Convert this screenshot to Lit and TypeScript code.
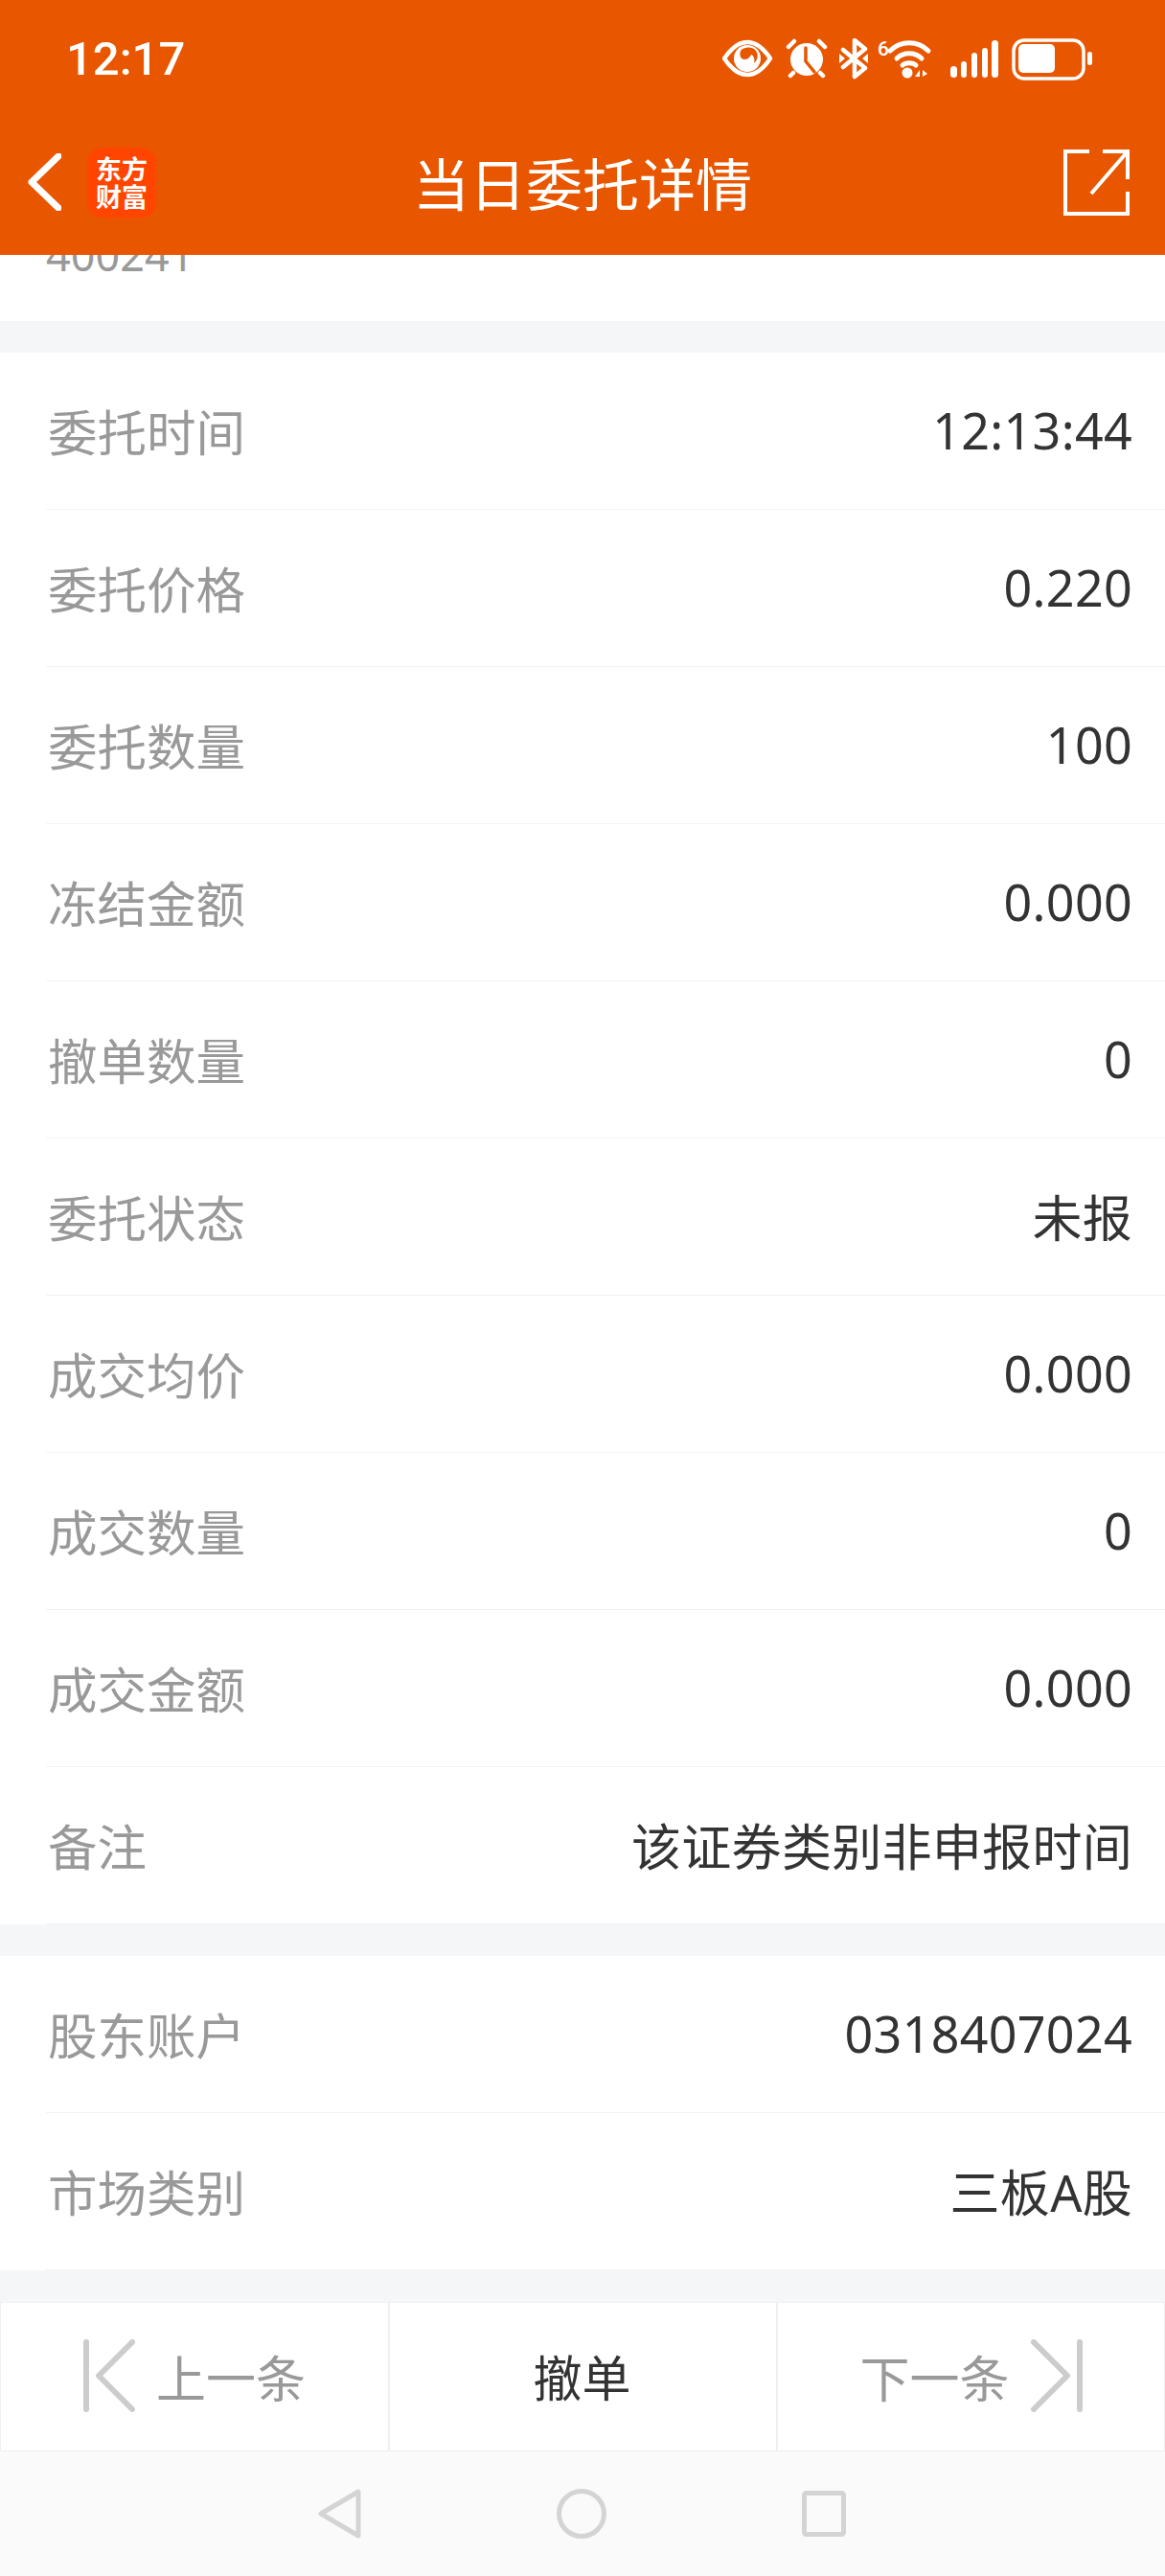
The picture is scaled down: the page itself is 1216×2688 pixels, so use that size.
import { LitElement, html, css } from 'lit';
import { customElement } from 'lit/decorators.js';

const SECTION_ONE: [string, string][] = [
  ['委托时间', '12:13:44'],
  ['委托价格', '0.220'],
  ['委托数量', '100'],
  ['冻结金额', '0.000'],
  ['撤单数量', '0'],
  ['委托状态', '未报'],
  ['成交均价', '0.000'],
  ['成交数量', '0'],
  ['成交金额', '0.000'],
  ['备注', '该证券类别非申报时间'],
];

const SECTION_TWO: [string, string][] = [
  ['股东账户', '0318407024'],
  ['市场类别', '三板A股'],
];

@customElement('app-root')
export class AppRoot extends LitElement {
  static styles = css`
    :host {
      display: block;
      width: 1216px;
      height: 2688px;
      overflow: hidden;
      background: #f5f6f8;
      font-family: 'Noto Sans', 'Noto Sans CJK SC', sans-serif;
    }

    .header {
      height: 266px;
      background: #e85600;
      color: #fff;
      display: flex;
      flex-direction: column;
    }

    .status {
      height: 124px;
      display: flex;
      justify-content: space-between;
      padding: 40px 72px 0 69px;
      box-sizing: border-box;
    }

    .time {
      font-family: Roboto, sans-serif;
      font-size: 49px;
      font-weight: 500;
      line-height: 44px;
    }

    .toolbar {
      display: grid;
      grid-template-columns: 1fr auto 1fr;
      align-items: center;
      height: 142px;
      padding: 0 37px;
      box-sizing: border-box;
    }

    .toolbar-left {
      display: flex;
      align-items: center;
      gap: 27px;
      margin: -10px 0 0 -8px;
    }

    .toolbar-right {
      display: flex;
      justify-content: flex-end;
      margin-top: -10px;
    }

    .logo {
      width: 72px;
      height: 73px;
      border-radius: 16px;
      background: #ff4500;
      font-family: 'Noto Sans CJK SC', sans-serif;
      font-size: 27px;
      line-height: 29px;
      font-weight: 700;
      text-align: center;
      display: flex;
      flex-direction: column;
      justify-content: center;
    }

    .title {
      font-family: 'Noto Sans CJK SC', sans-serif;
      font-size: 59px;
      line-height: 70px;
      margin-top: -10px;
    }

    .clipped {
      height: 69px;
      background: #fff;
      overflow: hidden;
      display: flex;
      align-items: flex-end;
      padding: 0 0 43px 48px;
      box-sizing: border-box;
      color: #999;
      font-size: 45px;
      line-height: 52px;
    }

    .section {
      background: #fff;
      margin-top: 33px;
    }

    .row {
      height: 164px;
      box-sizing: border-box;
      margin-left: 48px;
      padding: 0 34px 3px 2px;
      border-bottom: 1px solid #f1f2f4;
      display: flex;
      align-items: center;
      justify-content: space-between;
      font-size: 52px;
    }

    .label {
      color: #999;
      font-size: 51.5px;
    }

    .value {
      color: #333;
      letter-spacing: 0.3px;
    }

    .actions {
      margin-top: 33px;
      height: 156px;
      box-sizing: border-box;
      display: grid;
      grid-template-columns: 404px 403px 1fr;
      gap: 2px;
      background: #eeeff1;
      border: 1px solid #eeeff1;
    }

    .action {
      background: #fff;
      display: flex;
      align-items: center;
      justify-content: center;
      gap: 22px;
      font-size: 52px;
      padding-bottom: 2px;
      color: #999;
    }

    .action.main {
      color: #333;
      font-size: 51px;
      padding-right: 2px;
    }

    .nav {
      height: 130px;
      padding-right: 2px;
      background: #fafafa;
      display: flex;
      align-items: center;
      justify-content: center;
      gap: 204px;
    }

    svg {
      display: block;
      flex: none;
    }
  `;

  private statusIcons() {
    return html`<svg width="390" height="44" viewBox="0 0 390 44" fill="none" stroke="#fff" stroke-linecap="round" stroke-linejoin="round">
      <path stroke-width="4.5" d="M2 21C10 9 18 4 26 4s16 5 24 17c-8 12-16 17-24 17S10 33 2 21Z" />
      <circle cx="26" cy="21" r="14" fill="#fff" stroke="none" />
      <path fill="#e85600" stroke="none" d="M19 13c3-4 12-5 16 0 3 4 2 10-2 13 1-4 0-8-3-9-2 5-7 6-10 4-2-2-2-5-1-8z" />

      <circle cx="88" cy="22" r="17" fill="#fff" stroke="none" />
      <path stroke="#e85600" stroke-width="3.5" d="M87 10v14l9 11" />
      <path stroke-width="4.5" d="M69 9l6-6M101 3l6 6M74 36l-3 3M102 36l3 3" />

      <path stroke-width="4.5" d="M126 12l23 19-11 9V2l11 9-23 19" />
      <path fill="#fff" stroke="none" d="M122 16l6 5-6 5zM152 16l-6 5 6 5z" />

      <text x="162" y="18" font-family="Roboto, sans-serif" font-size="21" font-weight="500" fill="#fff" stroke="none">6</text>
      <path stroke-width="5" d="M175 13c11-11 29-11 40 0M182 21c7-7 19-7 26 0M188 28c3-3 11-3 14 0" />
      <circle cx="193" cy="36" r="5.5" fill="#fff" stroke="none" />
      <path fill="#fff" stroke="none" d="M201 40l5-7v7zM209 33l5 4-5 3z" />

      <g fill="#fff" stroke="none">
        <rect x="238" y="29" width="7" height="12" rx="3.5" />
        <rect x="249" y="24" width="6" height="17" rx="3" />
        <rect x="260" y="15" width="6" height="26" rx="3" />
        <rect x="271" y="10" width="6" height="31" rx="3" />
        <rect x="281" y="2" width="7" height="39" rx="3.5" />
      </g>

      <rect x="304" y="2" width="73" height="40" rx="11" stroke-width="3.5" />
      <rect x="309" y="6" width="38" height="30" rx="5" fill="#fff" stroke="none" />
      <rect x="381" y="14" width="5" height="14" rx="2.5" fill="#fff" stroke="none" />
    </svg>`;
  }

  private rows(items: [string, string][]) {
    return items.map(
      ([label, value]) => html`<div class="row">
        <span class="label">${label}</span>
        <span class="value">${value}</span>
      </div>`
    );
  }

  render() {
    return html`
      <div class="header">
        <div class="status">
          <span class="time">12:17</span>
          ${this.statusIcons()}
        </div>
        <div class="toolbar">
          <div class="toolbar-left">
            <svg width="35" height="60" viewBox="0 0 35 60" fill="none" stroke="#fff" stroke-width="7" stroke-linecap="round" stroke-linejoin="round">
              <path d="M32 3L4 30l28 27" />
            </svg>
            <div class="logo"><span>东方</span><span>财富</span></div>
          </div>
          <div class="title">当日委托详情</div>
          <div class="toolbar-right">
            <svg width="69" height="69" viewBox="0 0 69 69" fill="none" stroke="#fff" stroke-width="4">
              <path d="M27 2H2v65h65V44M41 2h26v29M67 2L29 46" />
            </svg>
          </div>
        </div>
      </div>

      <div class="clipped"><span>400241</span></div>
      <div class="section">${this.rows(SECTION_ONE)}</div>
      <div class="section">${this.rows(SECTION_TWO)}</div>

      <div class="actions">
        <div class="action">
          <svg width="54" height="76" viewBox="0 0 54 76" fill="none" stroke="#ccc" stroke-width="6" stroke-linecap="round" stroke-linejoin="round">
            <path d="M3 3v70M51 3L16 38l35 35" />
          </svg>
          <span>上一条</span>
        </div>
        <div class="action main"><span>撤单</span></div>
        <div class="action">
          <span>下一条</span>
          <svg width="54" height="76" viewBox="0 0 54 76" fill="none" stroke="#ccc" stroke-width="6" stroke-linecap="round" stroke-linejoin="round">
            <path d="M51 3v70M3 3l35 35L3 73" />
          </svg>
        </div>
      </div>

      <div class="nav">
        <svg width="45" height="52" viewBox="0 0 45 52" fill="none" stroke="#d4d4d4" stroke-width="5" stroke-linejoin="round">
          <path d="M42 3v46L3 26z" />
        </svg>
        <svg width="52" height="52" viewBox="0 0 52 52" fill="none" stroke="#d4d4d4" stroke-width="5">
          <circle cx="26" cy="26" r="23.5" />
        </svg>
        <svg width="46" height="48" viewBox="0 0 46 48" fill="none" stroke="#d4d4d4" stroke-width="5" stroke-linejoin="round">
          <rect x="2.5" y="2.5" width="41" height="43" rx="2" />
        </svg>
      </div>
    `;
  }
}
